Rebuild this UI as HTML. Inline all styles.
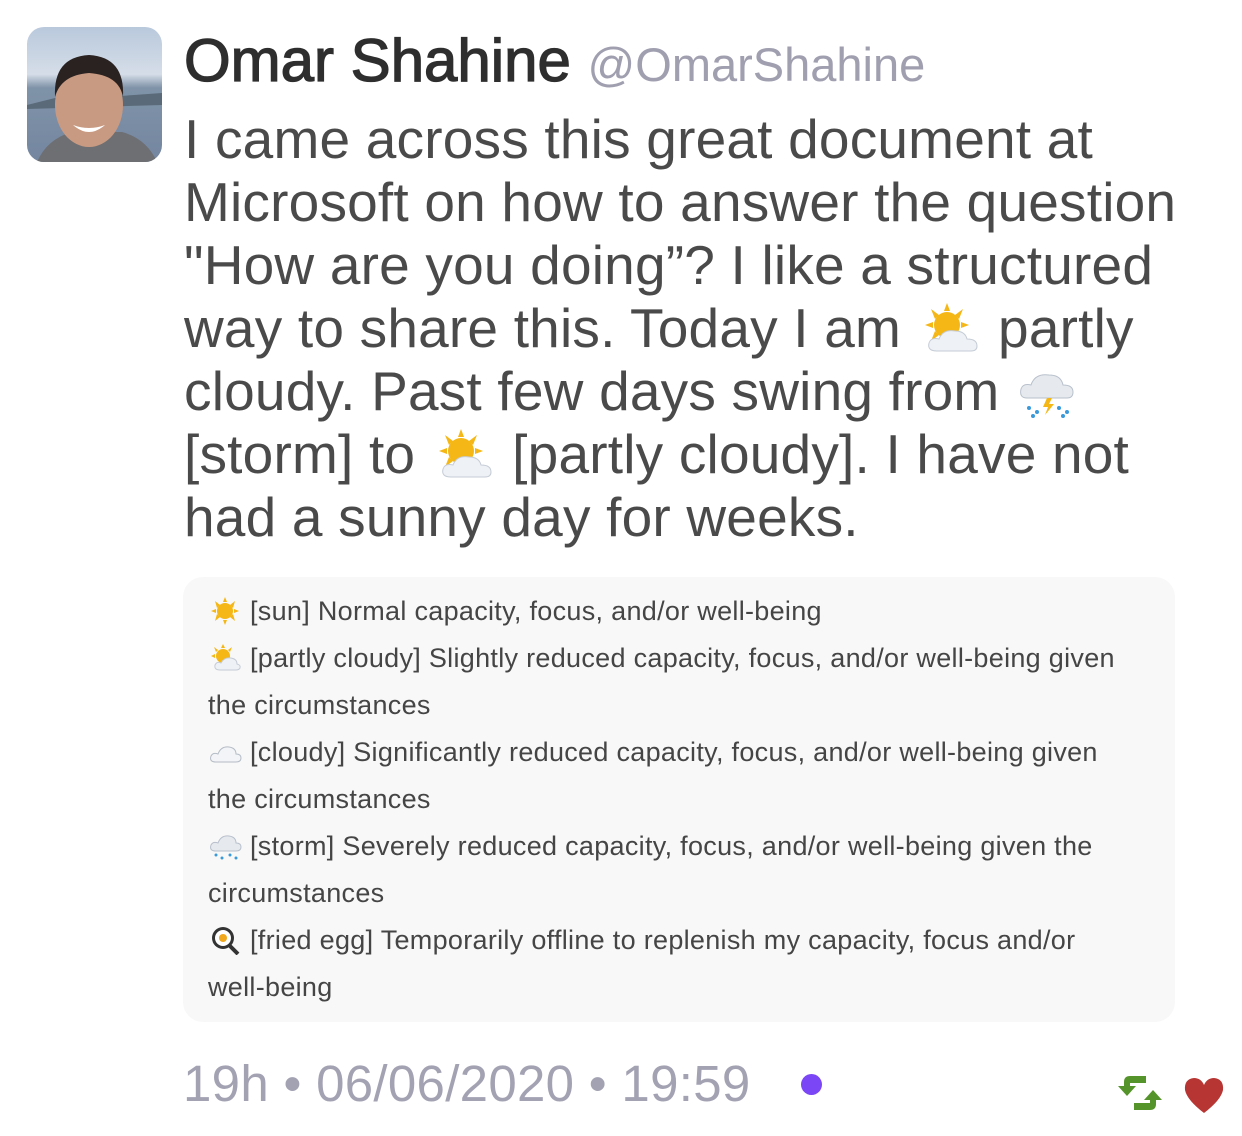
<!DOCTYPE html>
<html><head><meta charset="utf-8"><style>
body{margin:0;width:1242px;height:1136px;background:#fff;position:relative;font-family:"Liberation Sans",sans-serif;overflow:hidden}
.av{position:absolute;left:27px;top:27px;width:135px;height:135px;border-radius:17px;overflow:hidden;background:linear-gradient(#b9c9dc 0,#d5dde8 35%,#7f93a8 45%,#7486a0 100%)}
.name{position:absolute;left:184px;top:26px;font-size:60px;color:#2e2e2e;-webkit-text-stroke:1.3px #2e2e2e;white-space:nowrap}
.name span{color:#a09fb0;font-size:47px;-webkit-text-stroke:0}
.tx{position:absolute;left:184px;top:108px;font-size:55px;line-height:63px;color:#4a4a4a;white-space:nowrap;letter-spacing:0.2px}
.tx div{height:63px}
.emo{display:inline-block;width:66px;height:56px;vertical-align:-10px}
.box{position:absolute;left:183px;top:577px;width:992px;height:445px;background:#f8f8f8;border-radius:20px}
.bt{position:absolute;left:208px;top:588px;font-size:27px;color:#454545;white-space:nowrap;letter-spacing:0.3px}
.bt div{height:47px;line-height:47px}
.se{display:inline-block;width:34px;height:30px;vertical-align:-6px;margin-right:8px}
.ft{position:absolute;left:183px;top:1054px;font-size:51px;color:#a3a2b3;white-space:nowrap;letter-spacing:0.3px}
</style></head><body>
<div class="av">
<svg width="135" height="135" viewBox="0 0 135 135"><path d="M0 78 L40 68 L80 70 L135 66 L135 78 L0 82Z" fill="#5a6a78"/><path d="M10 135 Q20 112 45 105 L95 105 Q120 112 130 135Z" fill="#6d6f72"/><ellipse cx="62" cy="78" rx="34" ry="42" fill="#c99a82"/><path d="M28 70 Q26 30 62 28 Q98 30 96 70 Q92 48 62 46 Q34 48 28 70Z" fill="#2a2220"/><path d="M46 98 Q62 112 78 98 Q62 104 46 98Z" fill="#fff"/></svg>
</div>
<div class="name">Omar Shahine <span>@OmarShahine</span></div>
<div class="tx">
<div>I came across this great document at</div>
<div>Microsoft on how to answer the question</div>
<div>"How are you doing”? I like a structured</div>
<div>way to share this. Today I am <svg class="emo" viewBox="0 0 66 56"><g fill="#f5b716"><circle cx="30" cy="24" r="13"/><path d="M30 2l3 8h-6zM30 46l3-8h-6zM8 24l8 3v-6zM52 24l-8 3v-6zM14 8l8 6-4 4zM46 8l-8 6 4 4zM14 40l8-6-4-4z"/></g><path d="M20 50 Q10 50 12 42 Q14 36 22 38 Q26 28 38 30 Q48 30 50 38 Q60 38 60 45 Q60 50 54 50Z" fill="#eef1f5" stroke="#c5ccd6"/></svg> partly</div>
<div>cloudy. Past few days swing from <svg class="emo" viewBox="0 0 66 56"><path d="M12 34 Q4 34 6 25 Q8 19 16 21 Q20 9 34 11 Q46 11 48 21 Q58 21 58 28 Q58 34 52 34Z" fill="#e6eaef" stroke="#b8c0cb"/><path d="M32 34l-4 9h5l-3 8 9-11h-5l3-6z" fill="#f5b716"/><g fill="#3a9ad9"><circle cx="14" cy="44" r="2"/><circle cx="22" cy="48" r="2"/><circle cx="44" cy="44" r="2"/><circle cx="52" cy="48" r="2"/><circle cx="18" cy="52" r="2"/><circle cx="48" cy="52" r="2"/></g></svg></div>
<div>[storm] to <svg class="emo" viewBox="0 0 66 56"><g fill="#f5b716"><circle cx="30" cy="24" r="13"/><path d="M30 2l3 8h-6zM30 46l3-8h-6zM8 24l8 3v-6zM52 24l-8 3v-6zM14 8l8 6-4 4zM46 8l-8 6 4 4zM14 40l8-6-4-4z"/></g><path d="M20 50 Q10 50 12 42 Q14 36 22 38 Q26 28 38 30 Q48 30 50 38 Q60 38 60 45 Q60 50 54 50Z" fill="#eef1f5" stroke="#c5ccd6"/></svg> [partly cloudy]. I have not</div>
<div>had a sunny day for weeks.</div>
</div>
<div class="box"></div>
<div class="bt">
<div><svg class="se" viewBox="0 0 34 30"><g fill="#f5b716"><circle cx="17" cy="15" r="8"/><path d="M17 1l2 5h-4zM17 29l2-5h-4zM3 15l5 2v-4zM31 15l-5 2v-4zM7 5l5 4-3 3zM27 5l-5 4 3 3zM7 25l5-4-3-3zM27 25l-5-4 3-3z"/></g></svg>[sun] Normal capacity, focus, and/or well-being</div>
<div><svg class="se" viewBox="0 0 34 30"><g fill="#f5b716"><circle cx="15" cy="13" r="7"/><path d="M15 1l2 4h-4zM3 13l4 2v-4zM6 4l4 3-2 2zM24 4l-4 3 2 2z"/></g><path d="M12 27 Q6 27 7 22 Q9 18 13 20 Q16 14 23 15 Q29 16 29 21 Q33 22 32 25 Q31 27 28 27Z" fill="#eef1f5" stroke="#c5ccd6"/></svg>[partly cloudy] Slightly reduced capacity, focus, and/or well-being given</div>
<div>the circumstances</div>
<div><svg class="se" viewBox="0 0 34 30"><path d="M8 25 Q1 25 3 19 Q5 15 10 17 Q13 9 21 10 Q28 11 28 17 Q33 17 33 21 Q33 25 28 25Z" fill="#f2f4f7" stroke="#b5bcc6"/></svg>[cloudy] Significantly reduced capacity, focus, and/or well-being given</div>
<div>the circumstances</div>
<div><svg class="se" viewBox="0 0 34 30"><path d="M8 20 Q1 20 3 14 Q5 10 10 12 Q13 4 21 5 Q28 6 28 12 Q33 12 33 16 Q33 20 28 20Z" fill="#e6eaef" stroke="#b8c0cb"/><g fill="#3a9ad9"><circle cx="8" cy="24" r="1.5"/><circle cx="14" cy="27" r="1.5"/><circle cx="22" cy="24" r="1.5"/><circle cx="28" cy="27" r="1.5"/></g></svg>[storm] Severely reduced capacity, focus, and/or well-being given the</div>
<div>circumstances</div>
<div><svg class="se" viewBox="0 0 34 30"><circle cx="15" cy="13" r="11" fill="#333"/><circle cx="15" cy="13" r="8" fill="#fff"/><circle cx="15" cy="13" r="4" fill="#f2a81d"/><path d="M22 21l8 8" stroke="#333" stroke-width="4"/></svg>[fried egg] Temporarily offline to replenish my capacity, focus and/or</div>
<div>well-being</div>
</div>
<div class="ft">19h • 06/06/2020 • 19:59</div>
<div style="position:absolute;left:801px;top:1074px;width:21px;height:21px;border-radius:50%;background:#7b46f6"></div>
<svg style="position:absolute;left:1116px;top:1074px" width="50" height="38" viewBox="0 0 50 38"><path d="M30 2 H14 Q8 2 8 8 V12 H2 L11 22 L20 12 H14 V9 H30Z" fill="#55942a"/><path d="M18 36 H34 Q40 36 40 30 V26 H46 L37 16 L28 26 H34 V29 H18Z" fill="#55942a"/></svg>
<svg style="position:absolute;left:1183px;top:1076px" width="42" height="38" viewBox="0 0 42 38"><path d="M21 37 Q4 24 2 14 Q1 3 11 2 Q18 2 21 9 Q24 2 31 2 Q41 3 40 14 Q38 24 21 37Z" fill="#b73532"/></svg>
</body></html>
